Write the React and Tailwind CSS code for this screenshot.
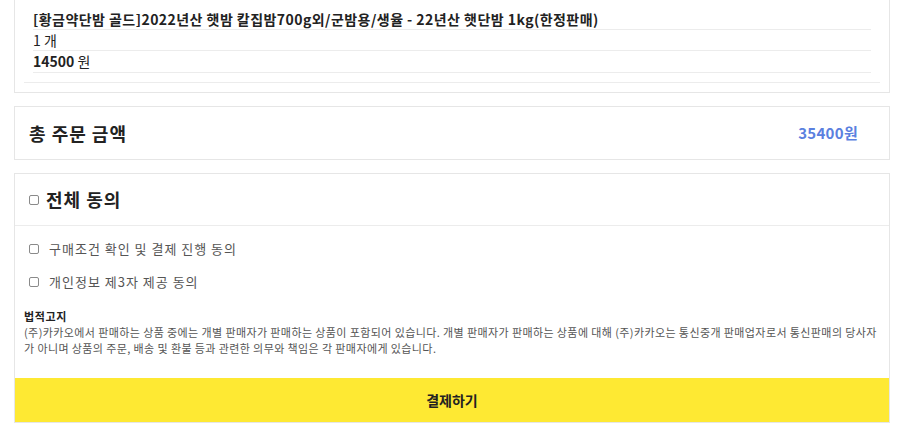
export default function App() {
  const font = { fontFamily: '"Noto Sans CJK KR", "Noto Sans", sans-serif' };
  const Box = () => (
    <span className="inline-block w-[10px] h-[10px] rounded-[2px] border border-[#8a8a8a] bg-white shrink-0" />
  );
  return (
    <div className="w-[900px] h-[440px] bg-white overflow-hidden text-[#222]" style={font}>
      <div className="ml-[14px] w-[876px]">
        {/* product card */}
        <div className="border-x border-b border-[#e6e6e6] pb-[9px]">
          <div className="mx-[9px] border-b border-[#ececec] pb-[9px] pt-[9px]">
            <div className="mx-[9px]">
              <div className="h-[21px] leading-[20px] text-[14px] font-bold tracking-[0.45px] border-b border-[#ececec] whitespace-nowrap">
                [황금약단밤 골드]2022년산 햇밤 칼집밤700g외/군밤용/생율 - 22년산 햇단밤 1kg(한정판매)
              </div>
              <div className="h-[21px] leading-[20px] text-[14px] border-b border-[#ececec]">1 개</div>
              <div className="h-[22px] leading-[21px] text-[14px] border-b border-[#ececec]">
                <span className="font-bold">14500</span> 원
              </div>
            </div>
          </div>
        </div>

        {/* total card */}
        <div className="mt-[13px] h-[54px] border border-[#e6e6e6] flex items-center justify-between pl-[14px] pr-[31px]">
          <span className="text-[18px] font-bold tracking-[1px]">총 주문 금액</span>
          <span className="text-[15px] font-bold text-[#5b80df] tracking-[0.3px]">35400원</span>
        </div>

        {/* agreement card */}
        <div className="mt-[13px] border border-[#e6e6e6]">
          <div className="h-[52px] border-b border-[#ececec] flex items-center pl-[14px] gap-[7px]">
            <Box />
            <span className="text-[18px] font-bold tracking-[1px]">전체 동의</span>
          </div>
          <div className="pt-[6px]">
            <div className="h-[33px] flex items-center pl-[14px] gap-[10px]">
              <Box />
              <span className="text-[13px] text-[#555] tracking-[1px]">구매조건 확인 및 결제 진행 동의</span>
            </div>
            <div className="h-[33px] flex items-center pl-[14px] gap-[10px]">
              <Box />
              <span className="text-[13px] text-[#555] tracking-[1px]">개인정보 제3자 제공 동의</span>
            </div>
          </div>
          <div className="mt-[10px] px-[9px] text-[11px] leading-[16px]">
            <div className="font-bold text-[#222] tracking-[0.6px]">법적고지</div>
            <div className="text-[#555] tracking-[0.4px]">
              (주)카카오에서 판매하는 상품 중에는 개별 판매자가 판매하는 상품이 포함되어 있습니다. 개별 판매자가 판매하는 상품에 대해 (주)카카오는 통신중개 판매업자로서 통신판매의 당사자가 아니며 상품의 주문, 배송 및 환불 등과 관련한 의무와 책임은 각 판매자에게 있습니다.
            </div>
          </div>
          <button className="mt-[22px] w-full h-[44px] bg-[#fee933] text-[14px] font-bold text-[#222] flex items-center justify-center">
            결제하기
          </button>
        </div>
      </div>
    </div>
  );
}
